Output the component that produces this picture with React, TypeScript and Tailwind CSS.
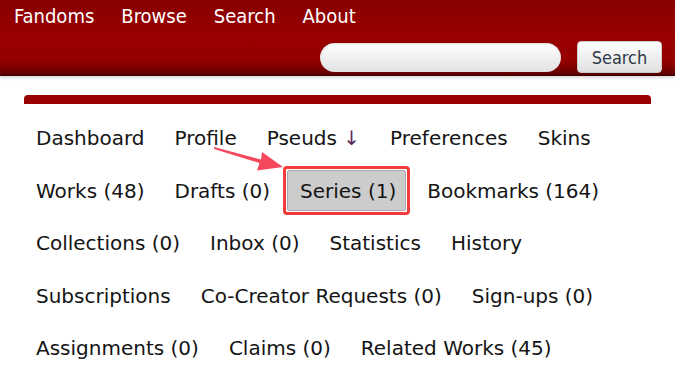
const rows: string[][] = [
  ["Dashboard", "Profile", "Pseuds", "Preferences", "Skins"],
  ["Works (48)", "Drafts (0)", "Series (1)", "Bookmarks (164)"],
  ["Collections (0)", "Inbox (0)", "Statistics", "History"],
  ["Subscriptions", "Co-Creator Requests (0)", "Sign-ups (0)"],
  ["Assignments (0)", "Claims (0)", "Related Works (45)"],
]

function Header() {
  return (
    <header className="h-[76px] bg-[linear-gradient(to_bottom,#880000_0%,#990000_45%,#950000_80%,#6a0000_96%,#3a0000_100%)] shadow-[0_2px_3px_rgba(0,0,0,0.15)] font-['DejaVu_Sans_Condensed','DejaVu_Sans',sans-serif]">
      <nav className="flex gap-[27px] pl-[14px] pt-[4px] text-[20px] leading-[24px] text-white">
        <span>Fandoms</span>
        <span>Browse</span>
        <span>Search</span>
        <span>About</span>
      </nav>
      <div className="flex justify-end items-center gap-[16px] pr-[13px] pt-[13px]">
        <div className="w-[241px] h-[29px] rounded-full bg-[linear-gradient(to_bottom,#ffffff,#e2e2e2)] shadow-[inset_0_1px_2px_rgba(0,0,0,0.15)]" />
        <button className="w-[85px] h-[32px] rounded-[4px] bg-[linear-gradient(to_bottom,#ffffff,#e0e0e0)] text-[18px] text-[#2f3a4a] border border-[#ccc]">
          Search
        </button>
      </div>
    </header>
  )
}

function Item({ label }: { label: string }) {
  if (label === "Series (1)") {
    return (
      <li className="ml-[-2px] mr-[2px] border-[3px] border-[#f23b3b] rounded-[4px] p-[1px]">
        <div className="h-[41px] flex items-center pl-[12px] pr-[9px] bg-[#cccccc] border border-[#aaa] rounded-[2px]">
          Series (1)
        </div>
      </li>
    )
  }
  if (label === "Pseuds") {
    return (
      <li className="px-[15px]">
        Pseuds <span className="text-[#5b2a5b]">↓</span>
      </li>
    )
  }
  return <li className="px-[15px] whitespace-nowrap">{label}</li>
}

export default function App() {
  return (
    <div className="relative w-[675px] h-[374px] overflow-hidden bg-white">
      <Header />
      <div className="mx-[24px] mt-[19px] h-[9px] bg-[#990000] rounded-t-[4px]" />
      <div className="pl-[21px] pt-[8px] font-['DejaVu_Sans',sans-serif] text-[20px] text-[#141414]">
        {rows.map((row, i) => (
          <ul key={i} className="flex items-center h-[52.5px]">
            {row.map((label) => (
              <Item key={label} label={label} />
            ))}
          </ul>
        ))}
      </div>
      <svg className="absolute left-0 top-0 pointer-events-none" width="675" height="374">
        <polygon
          points="214,147 261,159.5 262,152 283,167 257,170.5 259.5,163 214,149"
          fill="#f6485c"
        />
      </svg>
    </div>
  )
}
